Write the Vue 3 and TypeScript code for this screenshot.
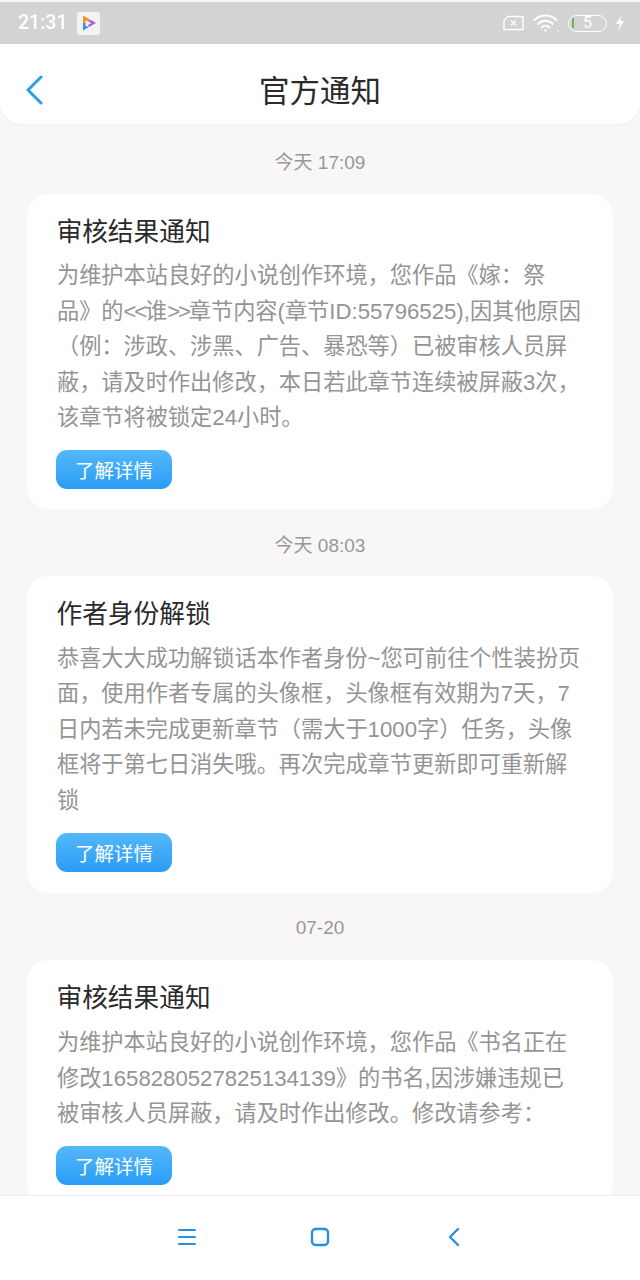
<script setup lang="ts">
interface Notice { time: string; title: string; lines: string[] }
const notices: Notice[] = [
  { time: '今天 17:09', title: '审核结果通知', lines: [
    '为维护本站良好的小说创作环境，您作品《嫁：祭',
    '品》的<<谁>>章节内容(章节ID:55796525),因其他原因',
    '（例：涉政、涉黑、广告、暴恐等）已被审核人员屏',
    '蔽，请及时作出修改，本日若此章节连续被屏蔽3次，',
    '该章节将被锁定24小时。' ] },
  { time: '今天 08:03', title: '作者身份解锁', lines: [
    '恭喜大大成功解锁话本作者身份~您可前往个性装扮页',
    '面，使用作者专属的头像框，头像框有效期为7天，7',
    '日内若未完成更新章节（需大于1000字）任务，头像',
    '框将于第七日消失哦。再次完成章节更新即可重新解',
    '锁' ] },
  { time: '07-20', title: '审核结果通知', lines: [
    '为维护本站良好的小说创作环境，您作品《书名正在',
    '修改1658280527825134139》的书名,因涉嫌违规已',
    '被审核人员屏蔽，请及时作出修改。修改请参考：' ] },
]
const parts = (line: string): string[] => line.split(/(<<|>>)/)
</script>

<template>
  <div class="page">
    <div class="status">
      <div class="status-left">
        <span class="clock">21:31</span>
        <span class="app-icon">
          <svg width="18" height="18" viewBox="0 0 18 18">
            <path d="M3 1.5 L11 6 L8 7.5 L5.5 6.2 V9 H3 Z" fill="#f0932b" />
            <path d="M8 7.5 L11 6 L16 9 L9 13 L8 11 L11.5 9 Z" fill="#a55fe0" />
            <path d="M3 9 H5.5 V12 L9 13 L3 16.5 Z" fill="#3b8ff0" />
          </svg>
        </span>
      </div>
      <div class="status-right">
        <svg width="23" height="16" viewBox="0 0 23 16" fill="none" stroke="#fff" stroke-width="1.4">
          <path d="M6 1.5 H21 V14.5 H2 V5.5 Z" stroke-linejoin="round" />
          <path d="M9 5.5 L14 10.5 M14 5.5 L9 10.5" />
        </svg>
        <svg width="27" height="20" viewBox="0 0 27 20" fill="none" stroke="#fff" stroke-width="2" stroke-linecap="round">
          <path d="M1.5 7 C7.5 1 17.5 1 23.5 7" />
          <path d="M5 11 C9.5 6.5 15.5 6.5 20 11" />
          <path d="M8.5 14.5 C11 12 14 12 16.5 14.5" />
          <circle cx="12.5" cy="17.5" r="1.2" fill="#fff" stroke="none" />
          <path d="M25 17 V19" stroke-width="1" />
        </svg>
        <span class="battery"><i class="level"></i><span>5</span></span>
        <svg width="10" height="18" viewBox="0 0 10 18"><path d="M7 1 L1 10 H5 L3 17 L9 7 H5 Z" fill="#fff" /></svg>
      </div>
    </div>

    <header class="nav">
      <svg class="back" width="18" height="30" viewBox="0 0 18 30" fill="none" stroke="#2b9fe6" stroke-width="3" stroke-linecap="round" stroke-linejoin="round">
        <path d="M16 2 L3 15 L16 28" />
      </svg>
      <h1>官方通知</h1>
    </header>

    <main class="list">
      <section v-for="n in notices" :key="n.time" class="group">
        <div class="time">{{ n.time }}</div>
        <article class="card">
          <h2>{{ n.title }}</h2>
          <p>
            <span v-for="l in n.lines" :key="l" class="line"><span
              v-for="(s, i) in parts(l)" :key="i" :class="{ tight: s === '<<' || s === '>>' }">{{ s }}</span></span>
          </p>
          <button class="more" type="button">了解详情</button>
        </article>
      </section>
    </main>

    <footer class="softkeys">
      <svg width="20" height="18" viewBox="0 0 20 18" stroke="#2a8fdc" stroke-width="2" stroke-linecap="round">
        <path d="M2 2 H18 M2 9 H18 M2 16 H18" />
      </svg>
      <svg class="key-home" width="20" height="20" viewBox="0 0 20 20" fill="none" stroke="#2a8fdc" stroke-width="2.4">
        <rect x="2" y="2" width="16" height="16" rx="3.5" />
      </svg>
      <svg class="key-back" width="14" height="20" viewBox="0 0 14 20" fill="none" stroke="#2a8fdc" stroke-width="2.4" stroke-linecap="round" stroke-linejoin="round">
        <path d="M11 2 L3 10 L11 18" />
      </svg>
    </footer>
  </div>
</template>

<style>
html, body { margin: 0; background: #f9f6f7; }
</style>

<style scoped>
.page {
  width: 640px;
  height: 1280px;
  display: flex;
  flex-direction: column;
  overflow: hidden;
  background: #f9f6f7;
  font-family: "Liberation Sans", "Noto Sans CJK SC", sans-serif;
}
.status {
  flex: none;
  height: 42px;
  margin-top: 2px;
  padding: 0 18px;
  background: #d3d3d3;
  display: flex;
  align-items: center;
  justify-content: space-between;
  color: #fff;
}
.status-left { display: flex; align-items: center; gap: 10px; }
.clock { font: 500 19.5px/1 Roboto, sans-serif; }
.app-icon {
  width: 23px;
  height: 23px;
  border-radius: 3px;
  background: #f3f3f3;
  display: flex;
  align-items: center;
  justify-content: center;
}
.status-right { display: flex; align-items: center; gap: 8px; margin-right: -3px; }
.battery {
  position: relative;
  width: 39px;
  height: 17px;
  box-sizing: border-box;
  border: 1.5px solid #fff;
  border-radius: 8.5px;
  font: 400 16px/14px Roboto, sans-serif;
  text-align: center;
}
.level {
  position: absolute;
  left: 3px;
  top: 2px;
  width: 2px;
  height: 10px;
  background: #6fb45a;
}
.nav {
  flex: none;
  height: 80px;
  box-sizing: border-box;
  padding-top: 15px;
  background: #fff;
  border-radius: 0 0 22px 22px;
  box-shadow: 0 1px 2px rgba(0, 0, 0, 0.03);
  display: flex;
  align-items: center;
  justify-content: center;
  position: relative;
}
.nav h1 {
  margin: 0;
  font-size: 30.5px;
  font-weight: 400;
  color: #2a2a2a;
  line-height: 1;
}
.back { position: absolute; left: 25px; top: 31px; }
.list {
  flex: 1;
  min-height: 0;
  overflow: hidden;
  padding: 3px 27px 0;
}
.group { display: block; }
.time {
  height: 67px;
  box-sizing: border-box;
  padding-bottom: 1px;
  display: flex;
  align-items: center;
  justify-content: center;
  font-size: 19px;
  color: #989898;
}
.group + .group .time { padding: 3px 0 0; }
.card {
  background: #fff;
  border-radius: 22px;
  padding: 20px 30px 20px;
}
.group:nth-child(2) .card { padding-bottom: 21px; }
.card h2 {
  margin: 0 0 0 -0.5px;
  font-size: 25.7px;
  font-weight: 400;
  line-height: 36px;
  color: #2a2a2a;
}
.card p {
  margin: 8px 0 0;
  font-size: 22.2px;
  line-height: 35.5px;
  color: #949494;
}
.group:nth-child(2) .card p,
.group:nth-child(3) .card p { margin-top: 9px; }
.line { display: block; white-space: nowrap; }
.tight { letter-spacing: -2.2px; }
.more {
  display: block;
  width: 116px;
  height: 39px;
  margin: 14px 0 0 -1px;
  padding: 0;
  border: 0;
  border-radius: 11px;
  background: linear-gradient(#54b8fa, #2a9cf5);
  color: #fff;
  font: 400 19.5px/39px "Noto Sans CJK SC", sans-serif;
}
.group:nth-child(2) .more { margin-top: 15px; }
.softkeys {
  flex: none;
  height: 85px;
  box-sizing: border-box;
  padding: 0 0 2px 177px;
  background: #fff;
  border-top: 1px solid #eeeeee;
  display: flex;
  align-items: center;
}
.key-home { margin-left: 113px; }
.key-back { margin-left: 117px; }
</style>
